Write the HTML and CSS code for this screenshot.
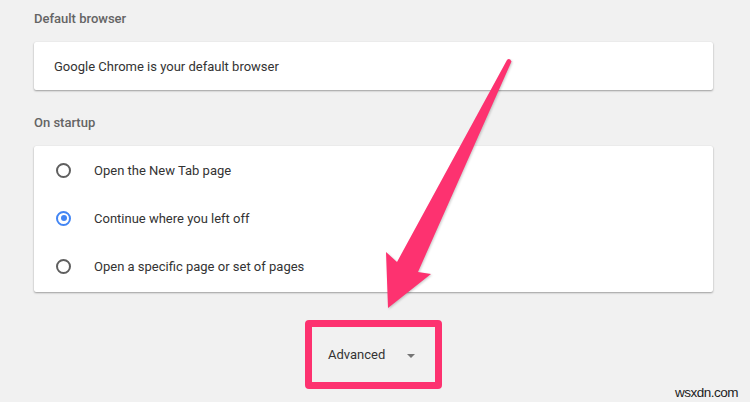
FILE: index.html
```html
<!DOCTYPE html>
<html>
<head>
<meta charset="utf-8">
<link rel="stylesheet" href="styles.css">
</head>
<body>
<div class="page">
  <h2 class="section-title">Default browser</h2>
  <div class="card card-single">
    <div class="card-text">Google Chrome is your default browser</div>
  </div>

  <h2 class="section-title section-gap">On startup</h2>
  <div class="card card-list">
    <div class="radio-row">
      <span class="radio"></span>
      <span class="radio-label">Open the New Tab page</span>
    </div>
    <div class="radio-row">
      <span class="radio radio-checked"></span>
      <span class="radio-label">Continue where you left off</span>
    </div>
    <div class="radio-row">
      <span class="radio"></span>
      <span class="radio-label">Open a specific page or set of pages</span>
    </div>
  </div>

  <div class="advanced-wrap">
    <div class="advanced-box">
      <span class="advanced-label">Advanced</span>
      <span class="caret"></span>
    </div>
  </div>
</div>

<svg class="arrow" width="750" height="402" viewBox="0 0 750 402" xmlns="http://www.w3.org/2000/svg">
  <path d="M507 60 Q509.5 57.5 511.5 61.5 L418 272 L431 274 L388 308 L386 252 L397 262 Z" fill="#fd3270"/>
</svg>

<div class="watermark">wsxdn.com</div>
</body>
</html>
```
FILE: styles.css
```css
html, body {
  margin: 0;
  padding: 0;
  background: #f1f1f1;
}

body {
  width: 750px;
  height: 402px;
  overflow: hidden;
  position: relative;
  font-family: Roboto, "Liberation Sans", Arial, sans-serif;
  color: #333;
}

.page {
  padding: 10px 0 0 34px;
  width: 679px;
}

.section-title {
  margin: 0;
  font-size: 13px;
  font-weight: 500;
  line-height: 18px;
  color: #646464;
}

.section-gap {
  margin-top: 24px;
}

.card {
  background: #fff;
  border-radius: 2px;
  box-shadow: 0 1px 2px rgba(0, 0, 0, 0.35), 0 0 1px rgba(0, 0, 0, 0.08);
  margin-top: 14px;
}

.card-single {
  height: 48px;
  display: flex;
  align-items: center;
  padding-left: 20px;
}

.card-text {
  font-size: 13px;
  color: #333;
}

.card-list {
  padding: 0 0 2px;
}

.radio-row {
  height: 48px;
  display: flex;
  align-items: center;
  padding-left: 22px;
}

.radio {
  width: 11px;
  height: 11px;
  border: 2px solid #5f5f5f;
  border-radius: 50%;
  box-sizing: content-box;
  position: relative;
  flex: none;
}

.radio-checked {
  border-color: #4285f4;
}

.radio-checked::after {
  content: "";
  position: absolute;
  left: 2.5px;
  top: 2.5px;
  width: 6px;
  height: 6px;
  border-radius: 50%;
  background: #4285f4;
}

.radio-label {
  margin-left: 23px;
  font-size: 13px;
  color: #333;
}

.advanced-wrap {
  display: flex;
  justify-content: center;
  margin-top: 28px;
}

.advanced-box {
  width: 137px;
  height: 69px;
  box-sizing: border-box;
  border: 7px solid #fd3270;
  border-radius: 4px;
  display: flex;
  align-items: center;
  padding-left: 16px;
}

.advanced-label {
  font-size: 13px;
  color: #333;
}

.caret {
  margin-left: 22px;
  width: 0;
  height: 0;
  border-left: 4px solid transparent;
  border-right: 4px solid transparent;
  border-top: 4px solid #757575;
  margin-top: 3px;
}

.arrow {
  position: absolute;
  left: 0;
  top: 0;
  filter: drop-shadow(1px 1px 1px rgba(0, 0, 0, 0.2));
}

.watermark {
  position: absolute;
  right: 12px;
  bottom: 2px;
  font-family: "Liberation Sans", Arial, sans-serif;
  font-size: 13.5px;
  line-height: 14px;
  letter-spacing: -0.5px;
  color: #222;
}
```
